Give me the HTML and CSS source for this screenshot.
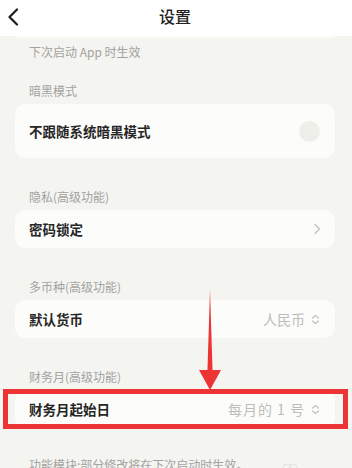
FILE: index.html
```html
<!DOCTYPE html>
<html lang="zh-CN">
<head>
<meta charset="utf-8">
<title>设置</title>
<link rel="stylesheet" href="styles.css">
</head>
<body>
<div class="screen">
  <header class="topbar">
    <svg class="back" width="12" height="18" viewBox="0 0 12 18"><path d="M10 1.5 L2.5 9 L10 16.5" fill="none" stroke="#1c1c1c" stroke-width="2.2" stroke-linecap="round" stroke-linejoin="round"/></svg>
    <h1 class="title">设置</h1>
  </header>
  <main class="content">
    <div class="card stub"></div>
    <p class="note first">下次启动 App 时生效</p>

    <section class="section dark">
      <p class="label">暗黑模式</p>
      <div class="card tall">
        <span class="item">不跟随系统暗黑模式</span>
        <span class="toggle"></span>
      </div>
    </section>

    <section class="section">
      <p class="label">隐私(高级功能)</p>
      <div class="card">
        <span class="item">密码锁定</span>
        <svg class="chev" width="8" height="12" viewBox="0 0 8 12"><path d="M2 1.5 L6.5 6 L2 10.5" fill="none" stroke="#c4c4c0" stroke-width="1.5" stroke-linecap="round" stroke-linejoin="round"/></svg>
      </div>
    </section>

    <section class="section">
      <p class="label">多币种(高级功能)</p>
      <div class="card">
        <span class="item">默认货币</span>
        <span class="value">人民币
          <svg class="updown" width="9" height="11" viewBox="0 0 9 11"><path d="M1.5 4 L4.5 1.5 L7.5 4 M1.5 7 L4.5 9.5 L7.5 7" fill="none" stroke="#c4c4c0" stroke-width="1.4" stroke-linecap="round" stroke-linejoin="round"/></svg>
        </span>
      </div>
    </section>

    <section class="section">
      <p class="label">财务月(高级功能)</p>
      <div class="card marked">
        <span class="item">财务月起始日</span>
        <span class="value spaced">每月的 1 号
          <svg class="updown" width="9" height="11" viewBox="0 0 9 11"><path d="M1.5 4 L4.5 1.5 L7.5 4 M1.5 7 L4.5 9.5 L7.5 7" fill="none" stroke="#c4c4c0" stroke-width="1.4" stroke-linecap="round" stroke-linejoin="round"/></svg>
        </span>
        <span class="redbox"></span>
      </div>
    </section>

    <section class="section last">
      <p class="label">功能模块:部分修改将在下次启动时生效。
        <svg class="faint" width="18" height="10" viewBox="0 0 18 10"><circle cx="6" cy="7" r="4" fill="none" stroke="#e2e2dd" stroke-width="1"/><circle cx="12" cy="7" r="4" fill="none" stroke="#e2e2dd" stroke-width="1"/></svg>
      </p>
    </section>
  </main>

  <svg class="arrow" width="30" height="102" viewBox="0 0 30 102">
    <polygon points="15,0 17.6,82 12.4,82" fill="#ec3434"/>
    <polygon points="4,80 26,80 15,100" fill="#ec3434"/>
  </svg>
</div>
</body>
</html>
```

FILE: styles.css
```css
* { box-sizing: border-box; }
html, body { margin: 0; padding: 0; }
body {
  width: 352px;
  height: 468px;
  overflow: hidden;
  background: #f4f4f0;
  font-family: "Noto Sans CJK SC", "Noto Sans", sans-serif;
}
.screen {
  position: relative;
  width: 352px;
  height: 468px;
  overflow: hidden;
}
.topbar {
  position: relative;
  height: 36px;
  background: #ffffff;
  display: flex;
  align-items: center;
  justify-content: center;
  padding-bottom: 4px;
}
.back {
  position: absolute;
  left: 7px;
  top: 8px;
}
.title {
  margin: 0;
  font-size: 16px;
  font-weight: 500;
  color: #1f1f1f;
  line-height: 20px;
  padding-right: 2px;
}
.content {
  padding: 0 17px 0 15px;
}
.card {
  position: relative;
  height: 38px;
  background: #fcfcfa;
  border-radius: 10px;
  display: flex;
  align-items: center;
  justify-content: space-between;
  padding: 0 14px;
}
.card.stub {
  height: 2px;
  border-radius: 0 0 10px 10px;
}
.card.tall { height: 54px; }
.note, .label {
  margin: 0;
  font-size: 12px;
  line-height: 18px;
  color: #a3a3a0;
  padding-left: 14px;
  white-space: nowrap;
}
.note.first { margin-top: 5px; }
.section { margin-top: 30px; }
.section.dark { margin-top: 21px; }
.section.last { margin-top: 28px; }
.label { margin-bottom: 4px; }
.item {
  font-size: 13.5px;
  font-weight: 600;
  color: #262626;
}
.toggle {
  width: 21px;
  height: 21px;
  border-radius: 50%;
  background: #efefea;
  margin-right: 1px;
}
.chev { margin-right: 0; }
.value {
  display: flex;
  align-items: center;
  gap: 6px;
  font-size: 14px;
  color: #bdbdba;
  margin-right: 1px;
}
.value.spaced { letter-spacing: 1px; }
.updown { flex: none; }
.faint {
  margin-left: 30px;
  vertical-align: -1px;
}
.redbox {
  position: absolute;
  left: -12px;
  right: -13px;
  top: -1px;
  bottom: -1px;
  border: 5px solid #ec3434;
}
.arrow {
  position: absolute;
  left: 195px;
  top: 290px;
}
```
